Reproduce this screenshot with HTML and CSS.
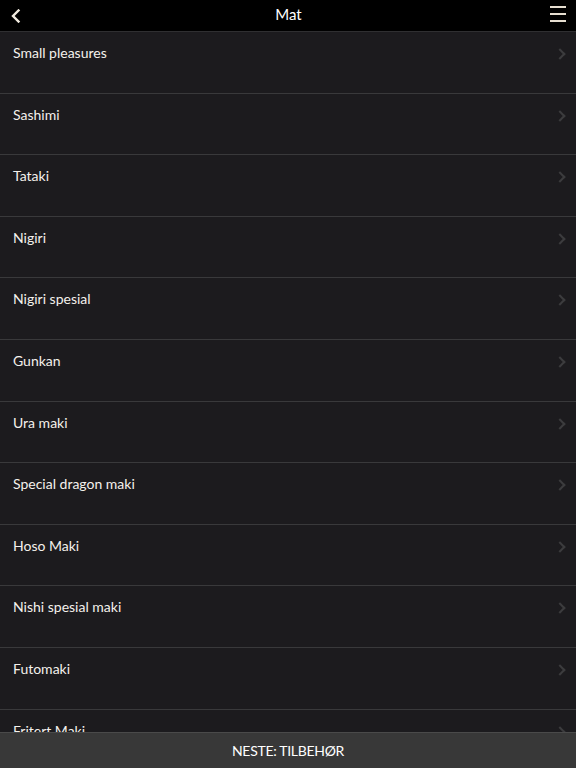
FILE: index.html
```html
<!DOCTYPE html>
<html lang="no">
<head>
    <meta charset="UTF-8">
    <meta name="viewport" content="width=device-width, initial-scale=1.0">
    <title>Mat</title>
    <link rel="stylesheet" href="styles.css">
</head>
<body>
    <div class="app">
        <!-- toppmeny -->
        <header class="top-bar">
            <button class="icon-btn back" type="button">
                <svg width="12" height="14" viewBox="0 0 12 14"><path d="M8.5 1.5 L3 7 L8.5 12.5" fill="none" stroke="#f2ece0" stroke-width="2.4" stroke-linecap="square"/></svg>
            </button>
            <h1>Mat</h1>
            <button class="icon-btn menu" type="button">
                <span></span><span></span><span></span>
            </button>
        </header>

        <ul class="list">
            <li class="row"><span>Small pleasures</span><i class="chev"></i></li>
            <li class="row"><span>Sashimi</span><i class="chev"></i></li>
            <li class="row"><span>Tataki</span><i class="chev"></i></li>
            <li class="row"><span>Nigiri</span><i class="chev"></i></li>
            <li class="row"><span>Nigiri spesial</span><i class="chev"></i></li>
            <li class="row"><span>Gunkan</span><i class="chev"></i></li>
            <li class="row"><span>Ura maki</span><i class="chev"></i></li>
            <li class="row"><span>Special dragon maki</span><i class="chev"></i></li>
            <li class="row"><span>Hoso Maki</span><i class="chev"></i></li>
            <li class="row"><span>Nishi spesial maki</span><i class="chev"></i></li>
            <li class="row"><span>Futomaki</span><i class="chev"></i></li>
            <li class="row"><span>Fritert Maki</span><i class="chev"></i></li>
        </ul>

        <footer class="next-bar">NESTE: TILBEHØR</footer>
    </div>
</body>
</html>
```

FILE: styles.css
```css
html, body {
    margin: 0;
    padding: 0;
    height: 100%;
}

body {
    font-family: Lato, "Open Sans", sans-serif;
    background: #1c1b1e;
    color: #f4f1ec;
    overflow: hidden;
}

.app {
    display: flex;
    flex-direction: column;
    height: 768px;
}

.top-bar {
    flex: none;
    height: 32px;
    box-sizing: border-box;
    background: #000;
    border-bottom: 1px solid #2f2f31;
    display: flex;
    align-items: center;
    justify-content: space-between;
    padding: 0 9px 3px 10px;
}

.top-bar h1 {
    margin: 0;
    font-size: 15px;
    font-weight: 400;
    color: #fff;
}

.icon-btn {
    background: none;
    border: 0;
    padding: 0;
    width: 18px;
    height: 24px;
    display: flex;
    align-items: center;
}

.back {
    margin-top: 4px;
}

.menu {
    flex-direction: column;
    justify-content: center;
    gap: 5px;
}

.menu span {
    display: block;
    width: 16px;
    height: 2px;
    background: #e6ded0;
}

.list {
    flex: 1;
    margin: 0;
    padding: 0;
    list-style: none;
    overflow: hidden;
}

.row {
    border-bottom: 1px solid #39393b;
    display: flex;
    justify-content: space-between;
    align-items: flex-start;
    padding: 12px 12px 0 13px;
    box-sizing: border-box;
    height: 61.6px;
    font-size: 14px;
}

.chev {
    width: 6px;
    height: 6px;
    border-top: 2px solid #3c3c3e;
    border-right: 2px solid #3c3c3e;
    transform: rotate(45deg);
    margin-top: 6px;
}

.next-bar {
    flex: none;
    height: 35px;
    background: #383838;
    border-top: 1px solid #4a4a4a;
    display: flex;
    align-items: center;
    justify-content: center;
    font-size: 14px;
    letter-spacing: -0.3px;
    color: #fff;
}
```
